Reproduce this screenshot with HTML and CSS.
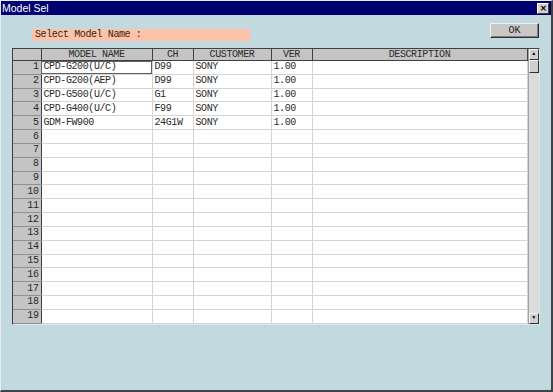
FILE: index.html
```html
<!DOCTYPE html>
<html lang="en">
<head>
  <meta charset="UTF-8">
  <title>Model Sel</title>
  <link rel="stylesheet" href="styles.css">
</head>
<body>

<div class="window">
  <div class="titlebar">
    <span class="title">Model Sel</span>
    <span class="close">&#x2715;</span>
  </div>

  <div class="content">
    <div class="toolbar">
      <div class="label">Select Model Name :</div>
      <button class="ok">OK</button>
    </div>

    <div class="grid">
      <table class="models">
        <colgroup>
          <col class="c-num">
          <col class="c-model">
          <col class="c-ch">
          <col class="c-cust">
          <col class="c-ver">
          <col class="c-desc">
        </colgroup>
        <thead>
          <tr>
            <th></th>
            <th>MODEL NAME</th>
            <th>CH</th>
            <th>CUSTOMER</th>
            <th>VER</th>
            <th>DESCRIPTION</th>
          </tr>
        </thead>
        <tbody id="rows"></tbody>
      </table>
      <div class="scrollbar">
        <div class="arrow up">&#9650;</div>
        <div class="thumb"></div>
        <div class="track"></div>
        <div class="arrow down">&#9660;</div>
      </div>
    </div>
  </div>
</div>

<script>
  const models = [
    ['CPD-G200(U/C)', 'D99', 'SONY', '1.00', ''],
    ['CPD-G200(AEP)', 'D99', 'SONY', '1.00', ''],
    ['CPD-G500(U/C)', 'G1', 'SONY', '1.00', ''],
    ['CPD-G400(U/C)', 'F99', 'SONY', '1.00', ''],
    ['GDM-FW900', '24G1W', 'SONY', '1.00', '']
  ];
  const tbody = document.getElementById('rows');

  for (let i = 0; i < 19; i++) {
    const tr = document.createElement('tr');
    const num = document.createElement('td');
    num.className = 'num';
    num.textContent = i + 1;
    tr.appendChild(num);

    const data = models[i] || ['', '', '', '', ''];
    data.forEach((value, j) => {
      const td = document.createElement('td');
      td.textContent = value;
      if (i === 0 && j === 0) td.className = 'focus';
      tr.appendChild(td);
    });
    tbody.appendChild(tr);
  }
</script>

</body>
</html>
```

FILE: styles.css
```css
body {
  margin: 0;
  background: #c2d9e0;
}

.window {
  width: 553px;
  height: 392px;
  box-sizing: border-box;
  background: #c2d9e0;
  border-top: 1px solid #e6eef2;
  border-left: 1px solid #e6eef2;
  border-right: 2px solid #3c4448;
  border-bottom: 2px solid #3c4448;
  display: flex;
  flex-direction: column;
}

.titlebar {
  height: 14px;
  background: #000070;
  color: #fff;
  font-family: "Liberation Sans", Arial, sans-serif;
  font-size: 10.5px;
  display: flex;
  align-items: center;
  justify-content: space-between;
  padding: 0 2px 0 1px;
}

.close {
  width: 10px;
  height: 9px;
  background: #d4d0c8;
  color: #000;
  font-size: 8px;
  font-weight: bold;
  line-height: 9px;
  text-align: center;
  border: 1px solid;
  border-color: #fff #404040 #404040 #fff;
}

.content {
  padding: 8px 12px 0 11px;
  font-family: "Liberation Mono", "Courier New", monospace;
  font-size: 10px;
  letter-spacing: -0.4px;
  color: #2a2a2a;
}

.toolbar {
  display: flex;
  justify-content: space-between;
  align-items: flex-start;
  height: 25px;
}

.label {
  margin: 6px 0 0 20px;
  width: 218px;
  height: 12px;
  line-height: 12px;
  padding-left: 3px;
  box-sizing: border-box;
  background: #fdc3a9;
  color: #402010;
}

.ok {
  width: 49px;
  height: 15px;
  padding: 0;
  margin: 0;
  font: inherit;
  color: #202020;
  background: #c8c8c8;
  border: 1px solid;
  border-color: #f0f0f0 #303030 #303030 #f0f0f0;
  box-shadow: inset -1px -1px 0 #808080;
}

.grid {
  display: flex;
  width: 528px;
  height: 277px;
  box-sizing: border-box;
  border: 1px solid #404040;
  border-right-color: #d8e8ec;
  border-bottom-color: #d8e8ec;
  background: #fff;
}

.models {
  width: 514px;
  border-collapse: collapse;
  table-layout: fixed;
  background: #fff;
}

.c-num { width: 28px; }
.c-model { width: 111px; }
.c-ch { width: 41px; }
.c-cust { width: 78px; }
.c-ver { width: 41px; }
.c-desc { width: 215px; }

.models th {
  height: 11px;
  padding: 0;
  font-weight: normal;
  background: #c4c4c4;
  border: 1px solid #404040;
  border-top: none;
  line-height: 11px;
  text-align: center;
}

.models th:first-child {
  border-left: none;
}

.models td {
  height: 12.8px;
  padding: 0 2px;
  border: 1px solid #d4d4d4;
  border-top: none;
  line-height: 12px;
  white-space: nowrap;
  overflow: hidden;
}

.models td.num {
  background: #c4c4c4;
  border: 1px solid #909090;
  border-left: none;
  border-right-color: #404040;
  text-align: right;
  padding: 0 2px 0 0;
}

.models td.focus {
  outline: 1px solid #606060;
  outline-offset: -1px;
}

.scrollbar {
  width: 12px;
  display: flex;
  flex-direction: column;
  background: #dcdcdc;
  border-left: 1px solid #a0a0a0;
}

.arrow,
.thumb {
  height: 11px;
  box-sizing: border-box;
  background: #d0d0d0;
  border: 1px solid;
  border-color: #f4f4f4 #303030 #303030 #f4f4f4;
  font-size: 5px;
  line-height: 9px;
  letter-spacing: 0;
  text-align: center;
  color: #000;
}

.thumb {
  height: 13px;
}

.track {
  flex: 1;
}
```
